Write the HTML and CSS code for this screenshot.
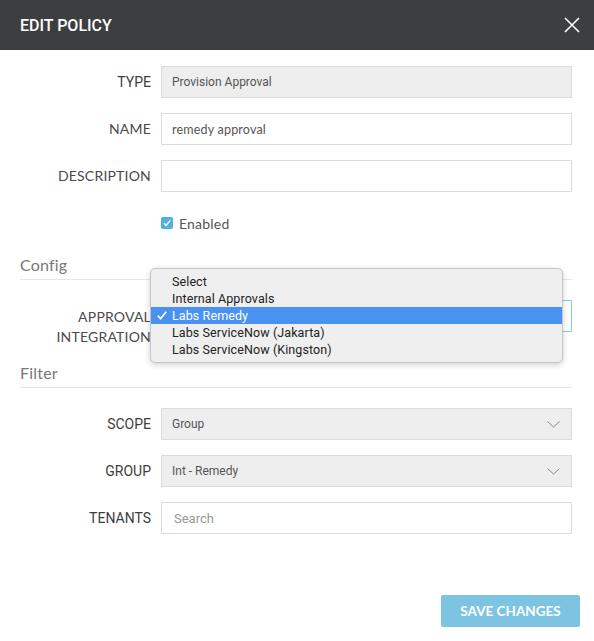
FILE: index.html
```html
<!DOCTYPE html>
<html>
<head>
<meta charset="utf-8">
<link rel="stylesheet" href="styles.css">
</head>
<body>
<div class="modal">
  <div class="header">
    <div class="title">EDIT POLICY</div>
    <svg class="close" width="16" height="16" viewBox="0 0 16 16"><path d="M1 1L15 15M15 1L1 15" stroke="#fff" stroke-width="1.6" fill="none"/></svg>
  </div>
  <div class="body">
    <div class="row">
      <div class="label din">TYPE</div>
      <div class="field gray din-text">Provision Approval</div>
    </div>
    <div class="row">
      <div class="label">NAME</div>
      <div class="field av-text">remedy approval</div>
    </div>
    <div class="row">
      <div class="label">DESCRIPTION</div>
      <div class="field"></div>
    </div>
    <div class="row">
      <div class="label"></div>
      <div class="check-wrap">
        <span class="checkbox"><svg width="12" height="12" viewBox="0 0 12 12"><path d="M3 6.2L5.1 8.4L9.2 3.4" stroke="#fff" stroke-width="1.4" fill="none"/></svg></span>
        <span class="check-label">Enabled</span>
      </div>
    </div>
    <div class="section">Config</div>
    <div class="row tall">
      <div class="label">APPROVAL<br>INTEGRATION</div>
      <div class="select-anchor">
        <div class="field focus"></div>
        <div class="menu">
          <div class="opt">Select</div>
          <div class="opt">Internal Approvals</div>
          <div class="opt sel"><svg class="tick" width="10" height="9" viewBox="0 0 10 9"><path d="M0.8 4.6L3.6 7.6L9.2 0.8" stroke="#fff" stroke-width="1.7" fill="none"/></svg>Labs Remedy</div>
          <div class="opt">Labs ServiceNow (Jakarta)</div>
          <div class="opt">Labs ServiceNow (Kingston)</div>
        </div>
      </div>
    </div>
    <div class="section">Filter</div>
    <div class="row">
      <div class="label din">SCOPE</div>
      <div class="field gray din-text select">Group<svg class="chev" width="13" height="7" viewBox="0 0 13 7"><path d="M0.5 0.5L6.5 6L12.5 0.5" stroke="#888" stroke-width="1" fill="none"/></svg></div>
    </div>
    <div class="row">
      <div class="label din">GROUP</div>
      <div class="field gray din-text select">Int - Remedy<svg class="chev" width="13" height="7" viewBox="0 0 13 7"><path d="M0.5 0.5L6.5 6L12.5 0.5" stroke="#888" stroke-width="1" fill="none"/></svg></div>
    </div>
    <div class="row">
      <div class="label din">TENANTS</div>
      <div class="field din-text placeholder">Search</div>
    </div>
  </div>
  <div class="footer">
    <button class="save">SAVE CHANGES</button>
  </div>
</div>
</body>
</html>
```
FILE: styles.css
```css
html, body {
  margin: 0;
  padding: 0;
  background: #fff;
}
.modal {
  width: 594px;
  height: 641px;
  background: #fff;
  font-family: Lato, "Open Sans", sans-serif;
}
.header {
  height: 50px;
  background: #3d3e40;
  display: flex;
  align-items: center;
  justify-content: space-between;
  padding: 0 14px 0 20px;
}
.title {
  color: #fff;
  font-family: Roboto, sans-serif;
  font-size: 16px;
  font-weight: 500;
  padding-top: 1px;
}
.close {
  display: block;
}
.body {
  padding: 16px 22px 0 20px;
}
.row {
  display: grid;
  grid-template-columns: 131px 1fr;
  column-gap: 10px;
  align-items: start;
  min-height: 32px;
  margin-bottom: 15px;
}
.row.tall {
  min-height: 47px;
}
.label {
  text-align: right;
  font-size: 14px;
  line-height: 20px;
  color: #4a4a4a;
  padding-top: 6px;
  letter-spacing: 0.2px;
}
.row.tall .label {
  padding-top: 7px;
}
.label.din {
  font-family: Roboto, sans-serif;
  letter-spacing: 0;
  color: #3e3e3e;
}
.field {
  height: 32px;
  box-sizing: border-box;
  border: 1px solid #dcdcdc;
  background: #fff;
  display: flex;
  align-items: center;
  padding: 0 10px;
  color: #555;
  position: relative;
}
.field.gray {
  background: #eeeeee;
}
.din-text {
  font-family: Roboto, sans-serif;
  font-size: 12px;
}
.av-text {
  font-family: Lato, sans-serif;
  font-size: 12.5px;
  letter-spacing: 0.2px;
}
.placeholder {
  color: #999;
  font-size: 13px;
  padding-left: 12px;
}
.select {
  justify-content: space-between;
}
.chev {
  display: block;
  margin-right: 1px;
}
.check-wrap {
  display: flex;
  align-items: center;
  height: 32px;
}
.checkbox {
  width: 12px;
  height: 12px;
  border-radius: 2px;
  background: #4eb2dc;
  display: flex;
  align-items: center;
  justify-content: center;
  margin-right: 6px;
}
.checkbox svg {
  display: block;
}
.check-label {
  font-size: 14px;
  color: #555;
  letter-spacing: 0.2px;
}
.section {
  font-size: 16px;
  line-height: 22px;
  color: #777;
  padding-bottom: 3px;
  border-bottom: 1px solid #e6e6e6;
  margin-bottom: 20px;
  letter-spacing: 0.2px;
}
.select-anchor {
  position: relative;
}
.field.focus {
  border-color: #8ccbe6;
}
.menu {
  position: absolute;
  left: -11px;
  top: -32px;
  width: 413px;
  box-sizing: border-box;
  padding: 4px 0;
  background: #efefef;
  border: 1px solid #c6c6c6;
  border-radius: 5px;
  box-shadow: 0 2px 6px rgba(0,0,0,0.18);
  font-family: Roboto, sans-serif;
  font-size: 12.5px;
  color: #222;
}
.opt {
  height: 17px;
  line-height: 17px;
  padding-left: 21px;
  position: relative;
  letter-spacing: 0.1px;
}
.opt.sel {
  background: #4a92f2;
  color: #fff;
}
.tick {
  position: absolute;
  left: 6px;
  top: 4px;
  display: block;
}
.footer {
  display: flex;
  justify-content: flex-end;
  padding: 0 14px 0 0;
  margin-top: 61px;
}
.save {
  width: 139px;
  height: 32px;
  border: none;
  border-radius: 2px;
  background: #7cc4e2;
  color: #fff;
  font-family: Lato, sans-serif;
  font-weight: 700;
  font-size: 13.5px;
  padding: 0;
}
```
